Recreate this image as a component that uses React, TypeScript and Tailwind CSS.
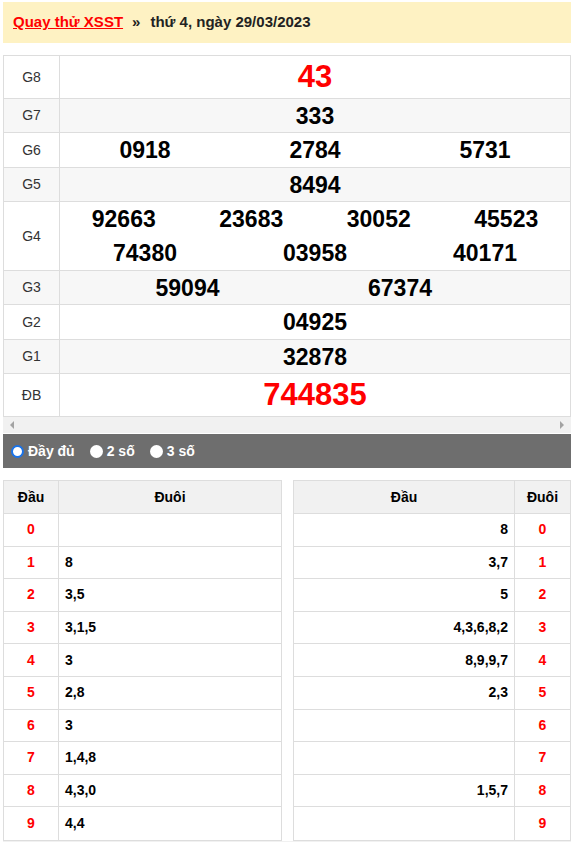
import React from "react";

const rows: { label: string; nums: string[][]; cls: string; h: string; alt?: boolean; g3?: boolean }[] = [
  { label: "G8", nums: [["43"]], cls: "text-[31px] text-[#ff0000]", h: "h-[43px]" },
  { label: "G7", nums: [["333"]], cls: "text-[23px] text-black", h: "h-[34px]", alt: true },
  { label: "G6", nums: [["0918", "2784", "5731"]], cls: "text-[23px] text-black", h: "h-[35px]" },
  { label: "G5", nums: [["8494"]], cls: "text-[23px] text-black", h: "h-[34px]", alt: true },
  {
    label: "G4",
    nums: [
      ["92663", "23683", "30052", "45523"],
      ["74380", "03958", "40171"],
    ],
    cls: "text-[23px] text-black",
    h: "h-[69px]",
  },
  { label: "G3", nums: [["59094", "67374"]], cls: "text-[23px] text-black", h: "h-[34px]", alt: true, g3: true },
  { label: "G2", nums: [["04925"]], cls: "text-[23px] text-black", h: "h-[35px]" },
  { label: "G1", nums: [["32878"]], cls: "text-[23px] text-black", h: "h-[34px]", alt: true },
  { label: "ĐB", nums: [["744835"]], cls: "text-[31px] text-[#ff0000]", h: "h-[42px]" },
];

const dau = ["", "8", "3,5", "3,1,5", "3", "2,8", "3", "1,4,8", "4,3,0", "4,4"];
const duoi = ["8", "3,7", "5", "4,3,6,8,2", "8,9,9,7", "2,3", "", "", "1,5,7", ""];

const gridCols: Record<number, string> = {
  1: "grid-cols-1",
  3: "grid-cols-3",
  4: "grid-cols-4",
};

function Radio({ checked, label }: { checked?: boolean; label: string }) {
  return (
    <label className="flex items-center gap-[4px] mr-[15px]">
      <span
        className={`w-[13px] h-[13px] rounded-full bg-white ${
          checked ? "border-[2px] border-[#1a73e8]" : ""
        }`}
      />
      <span className="text-white font-bold text-[14px]">{label}</span>
    </label>
  );
}

export default function App() {
  return (
    <div className="px-[3px] pt-[2px] font-['Liberation_Sans',Arial,sans-serif] bg-white">
      {/* header */}
      <div className="h-[41px] bg-[#fef2c3] flex items-center pl-[10px] text-[15px] font-bold">
        <a className="text-[#ff0000] underline">Quay thử XSST</a>
        <span className="text-[#222] ml-[9px] mr-[10px]">»</span>
        <span className="text-[#222]">thứ 4, ngày 29/03/2023</span>
      </div>

      {/* results table */}
      <div className="mt-[12px] border border-[#dddddd]">
        {rows.map((r, i) => (
          <div
            key={r.label}
            className={`flex ${r.h} ${i < rows.length - 1 ? "border-b border-[#dddddd]" : ""} ${
              r.alt ? "bg-[#f7f7f7]" : "bg-white"
            }`}
          >
            <div className="w-[56px] shrink-0 border-r border-[#dddddd] flex items-center justify-center text-[14px] text-[#333]">
              {r.label}
            </div>
            <div className="flex-1 flex flex-col justify-center">
              {r.g3 ? (
                <div className="grid grid-cols-6 font-bold text-[23px] text-black leading-[34px]">
                  <div className="col-span-3 text-center">{r.nums[0][0]}</div>
                  <div className="col-span-2 text-center">{r.nums[0][1]}</div>
                </div>
              ) : (
                r.nums.map((line, j) => (
                  <div key={j} className={`grid ${gridCols[line.length]} font-bold ${r.cls} leading-[34px]`}>
                    {line.map((n) => (
                      <div key={n} className="text-center">
                        {n}
                      </div>
                    ))}
                  </div>
                ))
              )}
            </div>
          </div>
        ))}
      </div>

      {/* fake horizontal scrollbar */}
      <div className="h-[16px] bg-[#f1f1f1] flex items-center justify-between px-[7px]">
        <span className="w-0 h-0 border-y-[4px] border-y-transparent border-r-[4px] border-r-[#a3a3a3]" />
        <span className="w-0 h-0 border-y-[4px] border-y-transparent border-l-[4px] border-l-[#a3a3a3]" />
      </div>

      {/* radio bar */}
      <div className="mt-[1px] h-[34px] bg-[#6e6e6e] flex items-center pl-[8px]">
        <Radio checked label="Đầy đủ" />
        <Radio label="2 số" />
        <Radio label="3 số" />
      </div>

      {/* loto tables */}
      <div className="mt-[12px] flex gap-[11px]">
        <div className="w-[279px] border border-[#dddddd] text-[14px] font-bold">
          <div className="flex h-[33px] bg-[#f1f1f1] border-b border-[#dddddd] text-[14px] text-black">
            <div className="w-[55px] border-r border-[#dddddd] flex items-center justify-center">Đầu</div>
            <div className="flex-1 flex items-center justify-center">Đuôi</div>
          </div>
          {dau.map((v, i) => (
            <div key={i} className={`flex h-[32.6px] ${i < 9 ? "border-b border-[#dddddd]" : ""}`}>
              <div className="w-[55px] border-r border-[#dddddd] flex items-center justify-center text-[#ff0000]">
                {i}
              </div>
              <div className="flex-1 flex items-center pl-[6px] text-black">{v}</div>
            </div>
          ))}
        </div>
        <div className="flex-1 border border-[#dddddd] text-[14px] font-bold">
          <div className="flex h-[33px] bg-[#f1f1f1] border-b border-[#dddddd] text-[14px] text-black">
            <div className="flex-1 border-r border-[#dddddd] flex items-center justify-center">Đầu</div>
            <div className="w-[55px] flex items-center justify-center">Đuôi</div>
          </div>
          {duoi.map((v, i) => (
            <div key={i} className={`flex h-[32.6px] ${i < 9 ? "border-b border-[#dddddd]" : ""}`}>
              <div className="flex-1 border-r border-[#dddddd] flex items-center justify-end pr-[6px] text-black">
                {v}
              </div>
              <div className="w-[55px] flex items-center justify-center text-[#ff0000]">{i}</div>
            </div>
          ))}
        </div>
      </div>
      <div className="h-[10px] bg-[#f1f1f1]" />
    </div>
  );
}
